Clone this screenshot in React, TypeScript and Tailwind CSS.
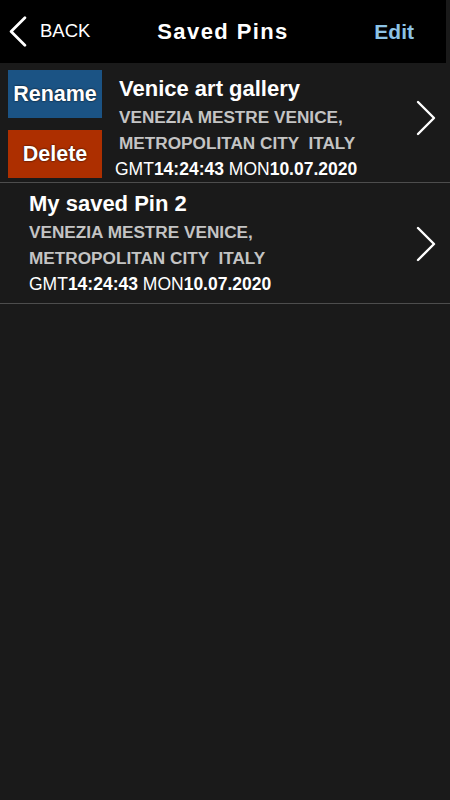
import React from "react";

const font = { fontFamily: '"Liberation Sans", Arial, sans-serif' };

function Chevron({ className, left }: { className?: string; left?: boolean }) {
  return (
    <svg viewBox="0 0 20 36" className={className} fill="none" stroke="currentColor" strokeWidth={left ? 3.2 : 2.4} strokeLinecap="round" strokeLinejoin="round">
      <path d={left ? "M18 2 L2 18 L18 34" : "M2 2 L18 18 L2 34"} />
    </svg>
  );
}

function PinText({ title, shiftDate }: { title: string; shiftDate?: boolean }) {
  return (
    <div className="flex flex-col">
      <div className="h-[30px] text-[22px] font-bold leading-[30px] text-white">{title}</div>
      <div className="h-[26px] whitespace-pre text-[17.2px] font-bold leading-[26px] text-[#c4c4c4]">VENEZIA MESTRE VENICE,</div>
      <div className="h-[26px] whitespace-pre text-[17.2px] font-bold leading-[26px] text-[#c4c4c4]">METROPOLITAN CITY  ITALY</div>
      <div className={`h-[26px] whitespace-pre text-[17.5px] leading-[26px] text-white ${shiftDate ? "-ml-1" : ""}`}>
        GMT<span className="font-bold">14:24:43</span> MON<span className="font-bold">10.07.2020</span>
      </div>
    </div>
  );
}

export default function App() {
  return (
    <div className="min-h-[800px] w-[450px] bg-[#1a1a1a]" style={font}>
      {/* Header */}
      <div className="flex h-[63px] w-[446px] items-center bg-black">
        <div className="flex w-[140px] items-center pl-[9px] text-white">
          <Chevron left className="h-[31px] w-[18px]" />
          <span className="ml-[13px] text-[18.5px] leading-none">BACK</span>
        </div>
        <div className="flex-1 text-center text-[22px] font-bold tracking-[1.4px] text-white">Saved Pins</div>
        <div className="w-[140px] pr-[32px] text-right text-[21px] font-bold text-[#8cc3e6]">Edit</div>
      </div>

      {/* Row 1: swiped with actions */}
      <div className="box-border flex h-[120px] items-start border-b border-[#4d4d4d] pt-[7px]">
        <div className="ml-[8px] flex w-[94px] flex-col gap-[12px]">
          <button className="flex h-[48px] items-center justify-center bg-[#1b5384] text-[21.5px] font-bold text-white [text-shadow:0_0_2px_#000]">
            Rename
          </button>
          <button className="flex h-[48px] items-center justify-center bg-[#ad2f00] text-[21.5px] font-bold text-white [text-shadow:0_0_2px_#000]">
            Delete
          </button>
        </div>
        <div className="ml-[17px] mt-[4px] flex-1">
          <PinText title="Venice art gallery" shiftDate />
        </div>
        <Chevron className="mr-[14px] mt-[30px] h-[36px] w-[20px] text-white" />
      </div>

      {/* Row 2 */}
      <div className="box-border flex h-[121px] items-start border-b border-[#4d4d4d] pl-[29px] pt-[6px]">
        <div className="flex-1">
          <PinText title="My saved Pin 2" />
        </div>
        <Chevron className="mr-[14px] mt-[37px] h-[36px] w-[20px] text-white" />
      </div>
    </div>
  );
}
